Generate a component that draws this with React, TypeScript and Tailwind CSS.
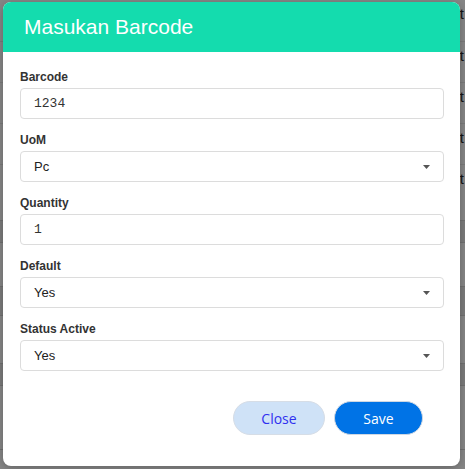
import { useState } from "react";

const fields = [
  { label: "Barcode", value: "1234", type: "input" },
  { label: "UoM", value: "Pc", type: "select" },
  { label: "Quantity", value: "1", type: "input" },
  { label: "Default", value: "Yes", type: "select" },
  { label: "Status Active", value: "Yes", type: "select" },
];

function Caret() {
  return (
    <svg width="7" height="4" viewBox="0 0 7 4" className="shrink-0">
      <path d="M0 0h7L3.5 4z" fill="#555" />
    </svg>
  );
}

export default function App() {
  const [values] = useState(fields);

  return (
    <div className="relative w-[465px] h-[469px] overflow-hidden bg-[#868686] font-['Liberation_Sans',Arial,sans-serif]">
      {/* Page behind the backdrop */}
      <div className="flex flex-col">
        {[0, 1, 2, 3, 4].map((i) => (
          <div
            key={i}
            className="h-[41px] flex items-start justify-end pt-[5px] border-t border-[#7a7a7a] first:border-t-0 text-[15px] leading-[18px] text-[#151515]"
          >
            <span className="pr-[1px]">t</span>
          </div>
        ))}
        <div className="h-[15px]" />
        <div className="h-[23px] bg-[#7b7b7b] border-y border-[#707070]" />
        <div className="h-[43px]" />
        <div className="h-[30px] bg-[#7b7b7b] border-y border-[#707070]" />
        <div className="h-[47px]" />
        <div className="h-[23px] bg-[#7b7b7b] border-y border-[#707070]" />
        <div className="h-[64px] border-b border-[#707070]" />
      </div>

      {/* Modal */}
      <div className="absolute left-[3px] top-[2px] w-[457px] h-[464px] rounded-[8px] bg-white overflow-hidden shadow-[0_2px_8px_rgba(0,0,0,0.25)] flex flex-col">
        <div className="h-[50px] shrink-0 bg-[#14dcae] flex items-center pl-[21px]">
          <h2 className="text-white text-[21px] leading-none pb-[2px]">
            Masukan Barcode
          </h2>
        </div>

        <div className="flex flex-col gap-[14px] pl-[17px] pr-[16px] pt-[18px]">
          {values.map((f) => (
            <div key={f.label} className="flex flex-col">
              <label className="text-[12px] leading-[14px] font-bold text-[#333] mb-[4px]">
                {f.label}
              </label>
              <div className="h-[31px] border border-[#dcdcdc] rounded-[4px] flex items-center justify-between pl-[13px] pr-[13px]">
                {f.type === "input" ? (
                  <span className="font-['Liberation_Mono','Courier_New',monospace] text-[13px] text-[#333]">
                    {f.value}
                  </span>
                ) : (
                  <>
                    <span className="text-[13px] text-[#222]">{f.value}</span>
                    <Caret />
                  </>
                )}
              </div>
            </div>
          ))}
        </div>

        <div className="flex justify-end gap-[9px] pr-[37px] mt-[30px]">
          <button className="w-[92px] h-[34px] rounded-full bg-[#cfe2f7] border border-[#d6dde6] text-[#3030f0] text-[14px] font-['Open_Sans',sans-serif]">
            Close
          </button>
          <button className="w-[89px] h-[34px] rounded-full bg-[#0073e6] border border-[#cfd8e3] text-white text-[14px] font-['Open_Sans',sans-serif]">
            Save
          </button>
        </div>
      </div>
    </div>
  );
}
